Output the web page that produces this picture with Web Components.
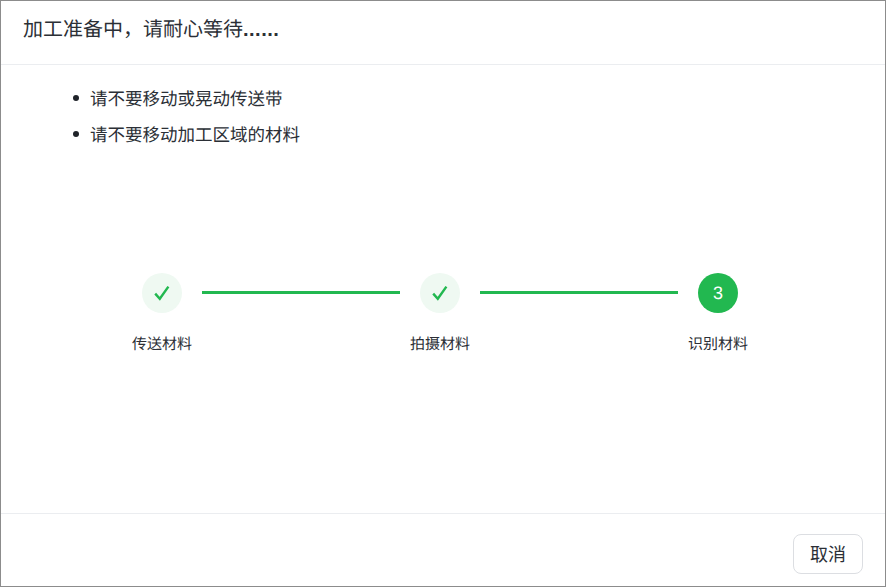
<!DOCTYPE html>
<html lang="zh">
<head>
<meta charset="utf-8">
<title>加工准备中</title>
<style>
    html, body {
        margin: 0;
        height: 100%;
        background: #fff;
    }
</style>
</head>
<body>
<prep-dialog>
    <span slot="title">加工准备中，请耐心等待<span style="letter-spacing: .5px; font-weight: bold">......</span></span>
    <prep-item>请不要移动或晃动传送带</prep-item>
    <prep-item>请不要移动加工区域的材料</prep-item>
    <prep-steps slot="steps">
        <prep-step state="done">传送材料</prep-step>
        <prep-step state="done">拍摄材料</prep-step>
        <prep-step state="active" num="3">识别材料</prep-step>
    </prep-steps>
    <prep-button slot="footer">取消</prep-button>
</prep-dialog>

<script>
class PrepDialog extends HTMLElement {
    constructor() {
        super();
    }

    connectedCallback() {
        let shadowRoot = this.attachShadow({ mode: 'open' });
        shadowRoot.innerHTML = `
            <style>
                :host {
                    display: flex;
                    flex-direction: column;
                    box-sizing: border-box;
                    width: 886px;
                    height: 587px;
                    border: 1px solid #8c8c8c;
                    background: #fff;
                    color: #2b2f36;
                    font-family: "Liberation Sans", "Noto Sans CJK SC", sans-serif;
                    text-rendering: geometricPrecision;
                }
                header {
                    box-sizing: border-box;
                    height: 64px;
                    padding: 0 22px 10px;
                    display: flex;
                    align-items: center;
                    font-size: 20px;
                    border-bottom: 1px solid #ebedf0;
                    flex: none;
                }
                main {
                    flex: 1;
                    min-height: 0;
                }
                .list {
                    margin: 15px 0 0;
                    padding: 0 0 0 72px;
                }
                .steps-gap {
                    height: 1px;
                }
                footer {
                    box-sizing: border-box;
                    height: 73px;
                    padding: 20px 22px 0 0;
                    display: flex;
                    justify-content: flex-end;
                    border-top: 1px solid #ebedf0;
                    flex: none;
                }
            </style>
            <header><slot name="title"></slot></header>
            <main>
                <div class="list" role="list"><slot></slot></div>
                <div class="steps-gap"></div>
                <slot name="steps"></slot>
            </main>
            <footer><slot name="footer"></slot></footer>
        `;
    }
}

customElements.define('prep-dialog', PrepDialog);


class PrepItem extends HTMLElement {
    constructor() {
        super();
    }

    connectedCallback() {
        let shadowRoot = this.attachShadow({ mode: 'open' });
        shadowRoot.innerHTML = `
            <style>
                :host {
                    display: flex;
                    align-items: center;
                    gap: 11px;
                    height: 36px;
                    font-size: 17.5px;
                }
                .dot {
                    width: 6px;
                    height: 6px;
                    border-radius: 50%;
                    background: #1f2329;
                    flex: none;
                }
            </style>
            <span class="dot"></span>
            <span><slot></slot></span>
        `;
    }
}

customElements.define('prep-item', PrepItem);


class PrepSteps extends HTMLElement {
    constructor() {
        super();
    }

    connectedCallback() {
        let shadowRoot = this.attachShadow({ mode: 'open' });
        shadowRoot.innerHTML = `
            <style>
                :host {
                    display: flex;
                    margin-top: 120px;
                    padding-left: 131px;
                }
                .row {
                    display: flex;
                    width: 616px;
                    justify-content: space-between;
                    position: relative;
                }
                .line {
                    position: absolute;
                    top: 18px;
                    height: 3px;
                    width: 198px;
                    background: #22b850;
                }
                .a { left: 70px; }
                .b { left: 348px; }
            </style>
            <div class="row">
                <slot></slot>
                <div class="line a"></div>
                <div class="line b"></div>
            </div>
        `;
    }
}

customElements.define('prep-steps', PrepSteps);


class PrepStep extends HTMLElement {
    constructor() {
        super();
    }

    connectedCallback() {
        let shadowRoot = this.attachShadow({ mode: 'open' });
        let done = this.getAttribute('state') === 'done';
        let inner = done
            ? `<svg width="16" height="16" viewBox="0 0 16 16" fill="none"><path d="M1.2 8.6 L5.8 13.8 L14.4 1.6" stroke="#22b850" stroke-width="2.4"/></svg>`
            : this.getAttribute('num');
        shadowRoot.innerHTML = `
            <style>
                :host {
                    display: flex;
                    flex-direction: column;
                    align-items: center;
                    width: 60px;
                }
                .dot {
                    width: 40px;
                    height: 40px;
                    border-radius: 50%;
                    display: flex;
                    align-items: center;
                    justify-content: center;
                    font-size: 18px;
                    background: ${done ? '#eff9f2' : '#22b850'};
                    color: #fff;
                }
                .label {
                    margin-top: 22px;
                    font-size: 15px;
                    line-height: 20px;
                    white-space: nowrap;
                }
            </style>
            <div class="dot">${inner}</div>
            <div class="label"><slot></slot></div>
        `;
    }
}

customElements.define('prep-step', PrepStep);


class PrepButton extends HTMLElement {
    constructor() {
        super();
    }

    connectedCallback() {
        let shadowRoot = this.attachShadow({ mode: 'open' });
        shadowRoot.innerHTML = `
            <style>
                :host {
                    display: block;
                }
                button {
                    box-sizing: border-box;
                    width: 70px;
                    height: 40px;
                    padding: 0 0 2px;
                    background: #fff;
                    border: 1px solid #dcdee2;
                    border-radius: 8px;
                    color: inherit;
                    font: inherit;
                    font-size: 18px;
                }
            </style>
            <button><slot></slot></button>
        `;
    }
}

customElements.define('prep-button', PrepButton);
</script>
</body>
</html>
